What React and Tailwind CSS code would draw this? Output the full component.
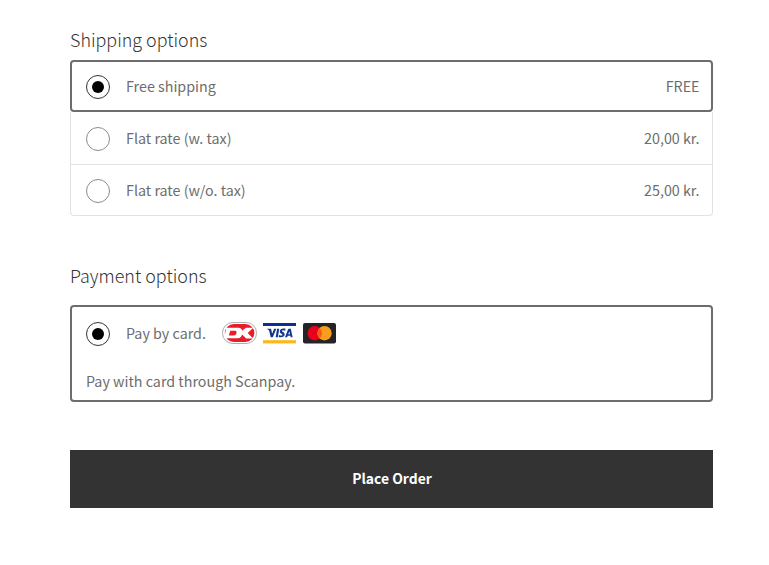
function Radio({ checked }) {
  return (
    <span
      className={`flex size-6 shrink-0 items-center justify-center rounded-full border ${
        checked ? 'border-[#333333]' : 'border-[#8c8c8c]'
      }`}
    >
      {checked && <span className="size-3 rounded-full bg-black" />}
    </span>
  );
}

function Dankort() {
  return (
    <svg width="35" height="22" viewBox="0 0 35 22" aria-label="Dankort">
      <rect x="0.5" y="0.5" width="34" height="21" rx="10.2" fill="#fff" stroke="#999" strokeWidth="0.8" />
      <rect x="2.8" y="2" width="29.6" height="18" rx="9" fill="#e81c2b" />
      <path fillRule="evenodd" fill="#fff" d="M4.2 5.7H16.5Q19.9 6 20.1 8.8L24 5.7H31.2L25.7 10.9L31 16.5H24.2L20.1 12.5Q19.2 16.1 15.7 16.3H2.2L4.2 5.7ZM8.2 8.8L6.9 13.5H12.2Q14 13.4 14.6 11Q15 8.9 12.9 8.8Z" />
    </svg>
  );
}

function Visa() {
  return (
    <svg width="33" height="21" viewBox="0 0 33 21" aria-label="Visa">
      <rect width="33" height="3" fill="#0b3190" />
      <rect y="17.2" width="33" height="3.2" fill="#fdb71a" />
      <g fill="#10358f" transform="translate(0.4 -0.6) scale(1 1.02)">
        <path d="M4 6.2H7.1Q7.8 6.2 7.9 6.9L8.7 11.2L10.7 6.2H12.9L9.4 14.5H7.3L5.7 8Q5.5 7.3 4 6.7Z" />
        <path d="M13.7 6.2H15.8L14.4 14.5H12.3Z" />
        <path d="M22.1 6.3L21.8 8.1Q18.7 7.1 18.5 8.4C18.4 9.3 21.3 9.6 21.3 11.7C21.2 14.8 17.4 15.1 15.3 14.2L15.6 12.3Q18.9 13.7 19.1 12.1C19.1 11.1 16.3 10.8 16.4 8.8C16.6 5.8 20.1 5.6 22.1 6.3Z" />
        <path fillRule="evenodd" d="M25.4 6.2H27.4L29.2 14.5H27.3L27 13.2H24.3L23.8 14.5H21.6L24.7 6.7Q24.9 6.2 25.4 6.2ZM25.9 8.6L24.9 11.6H26.6Z" />
      </g>
    </svg>
  );
}

function Mastercard() {
  return (
    <svg width="33" height="21" viewBox="0 0 33 21" aria-label="Mastercard">
      <rect width="33" height="20.5" rx="2" fill="#222427" />
      <circle cx="11.8" cy="10.2" r="7.2" fill="#eb001b" />
      <circle cx="21.5" cy="10.2" r="7.2" fill="#f79e1b" />
      <path d="M16.65 4.9A7.2 7.2 0 0 1 16.65 15.5A7.2 7.2 0 0 1 16.65 4.9Z" fill="#f45a16" />
    </svg>
  );
}

const rates = [
  { label: 'Flat rate (w. tax)', price: '20,00 kr.' },
  { label: 'Flat rate (w/o. tax)', price: '25,00 kr.' },
];

export default function App() {
  return (
    <main className="h-[565px] bg-white pr-14 pl-[70px] pt-6 font-['Noto_Sans_CJK_SC',sans-serif] text-[14.3px] leading-6 text-[#6d6d6d]">
      <h2 className="h-9 text-[17.9px] leading-[30px] font-light text-[#333333]">Shipping options</h2>
      <section>
        <div className="flex h-[52px] items-center rounded border-2 border-[#6d6d6d] pr-[11.5px] pl-3.5 pt-px">
          <Radio checked />
          <span className="ml-4 flex-1 pb-0.5">Free shipping</span>
          <span className="pb-0.5">FREE</span>
        </div>
        <div className="rounded-b border-x border-b border-[#e2e2e2]">
          {rates.map((rate, index) => (
            <div
              key={rate.label}
              className={`flex items-center pr-[12.5px] pl-[15px] ${
                index === 0 ? 'h-[53px] border-b border-[#e2e2e2] pt-px' : 'h-[50px] pt-0.5'
              }`}
            >
              <Radio />
              <span className="ml-4 flex-1 pb-0.5">{rate.label}</span>
              <span className="pb-0.5">{rate.price}</span>
            </div>
          ))}
        </div>
      </section>
      <h2 className="mt-11 h-[45px] text-[17.9px] leading-[30px] font-light text-[#333333]">Payment options</h2>
      <section className="h-[97px] rounded border-2 border-[#6d6d6d] px-3.5 pt-[15px]">
        <div className="flex h-6 items-center">
          <Radio checked />
          <span className="ml-4 w-24 pb-0.5">Pay by card.</span>
          <div className="flex items-center pb-0.5">
            <Dankort />
            <span className="ml-1.5">
              <Visa />
            </span>
            <span className="ml-[7px]">
              <Mastercard />
            </span>
          </div>
        </div>
        <p className="mt-[23px]">Pay with card through Scanpay.</p>
      </section>
      <button className="mt-12 flex h-[58px] w-full items-center justify-center bg-[#333333] pb-0.5 pl-px text-[13.9px] font-semibold text-white">
        Place Order
      </button>
    </main>
  );
}
